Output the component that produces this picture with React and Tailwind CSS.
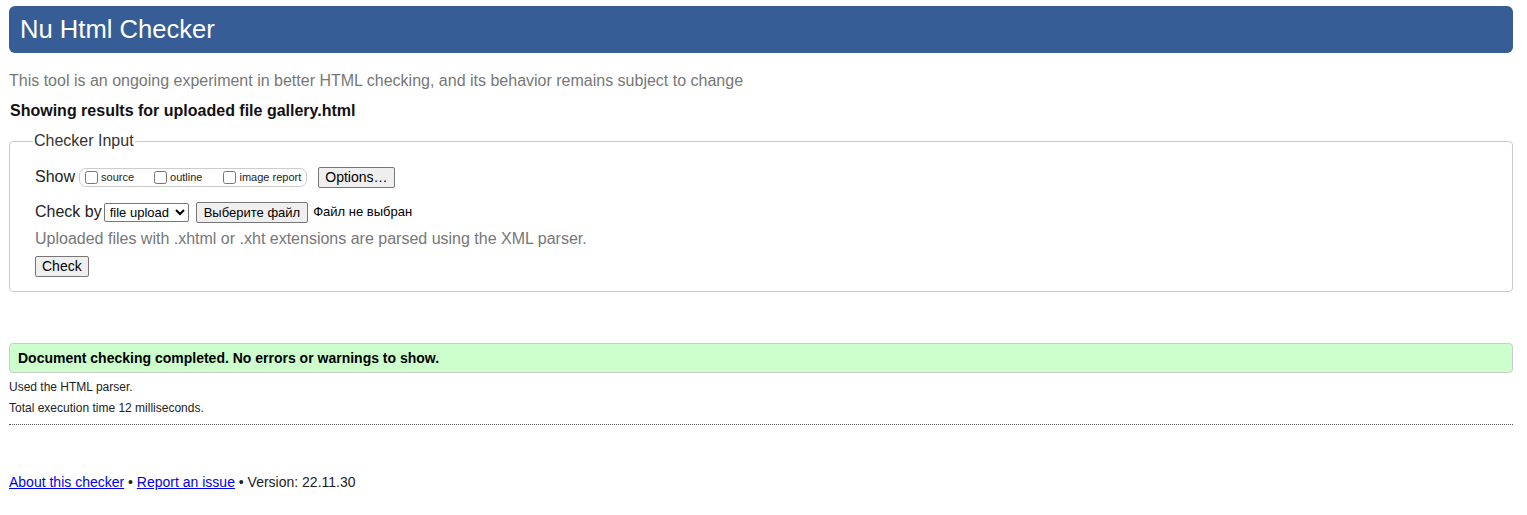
export default function App() {
  return (
    <div className="pl-[9px] pr-[14px] pt-[6px] pb-8 bg-white text-[#222] font-['Liberation_Sans',Arial,sans-serif]">
      <h1 className="bg-[#365d95] text-white text-[25.6px] leading-[47px] h-[47px] pl-[11px] rounded-[6px]">
        Nu Html Checker
      </h1>

      <p className="mt-[18px] text-[16px] leading-[20px] text-[#777]">
        This tool is an ongoing experiment in better HTML checking, and its behavior remains subject to change
      </p>
      <p className="mt-[10px] text-[16px] leading-[20px] font-bold text-[#111] pl-px">
        Showing results for uploaded file gallery.html
      </p>

      <fieldset className="mt-[11px] border border-[#ccc] rounded-[4px] pl-[25px] pr-4 pb-[13px] pt-[15px]">
        <legend className="text-[16px] leading-[18px] -ml-0.5 px-px text-[#333]">Checker Input</legend>

        <div className="flex items-center h-[24px]">
          <span className="text-[16px] text-[#222]">Show</span>
          <div className="ml-[4px] flex items-center h-[19px] border border-[#ccc] rounded-[7px] pl-[2px] pr-[5px]">
            <label className="flex items-center text-[11px] text-[#222]">
              <input type="checkbox" className="w-[13px] h-[13px] m-[3px] mr-[3px]" />
              source
            </label>
            <label className="flex items-center text-[11px] text-[#222] ml-[17px]">
              <input type="checkbox" className="w-[13px] h-[13px] m-[3px] mr-[3px]" />
              outline
            </label>
            <label className="flex items-center text-[11px] text-[#222] ml-[18px]">
              <input type="checkbox" className="w-[13px] h-[13px] m-[3px] mr-[3px]" />
              image report
            </label>
          </div>
          <button className="ml-[11px] h-[21px] px-[6px] text-[14px] leading-[19px] bg-[#efefef] border border-[#767676] rounded-[2px] text-black">
            Options…
          </button>
        </div>

        <div className="flex items-center h-[24px] mt-[11px]">
          <span className="text-[16px] text-[#222]">Check by</span>
          <select className="ml-[2px] h-[19px] w-[85px] text-[13px] leading-[17px] border border-[#767676] rounded-[2px] bg-white text-black pl-px">
            <option>file upload</option>
          </select>
          <button className="ml-[7px] h-[21px] px-[7px] text-[13px] leading-[19px] bg-[#efefef] border border-[#767676] rounded-[2px] text-black">
            Выберите файл
          </button>
          <span className="ml-[5px] text-[13px] text-black">Файл не выбран</span>
        </div>

        <p className="mt-[5px] text-[16px] leading-[20px] text-[#777]">
          Uploaded files with .xhtml or .xht extensions are parsed using the XML parser.
        </p>

        <button className="mt-[7px] h-[21px] px-[6px] text-[14px] leading-[19px] bg-[#efefef] border border-[#767676] rounded-[2px] text-black">
          Check
        </button>
      </fieldset>

      <div className="mt-[51px] h-[30px] flex items-center bg-[#ccffcc] border border-[#ccc] rounded-[4px] pl-[8px]">
        <p className="text-[14px] font-bold text-black">
          Document checking completed. No errors or warnings to show.
        </p>
      </div>

      <p className="mt-[7px] text-[12px] leading-[14px] text-[#222]">Used the HTML parser.</p>
      <p className="mt-[7px] text-[12px] leading-[14px] text-[#222]">Total execution time 12 milliseconds.</p>

      <div className="mt-[9px] border-t border-dotted border-[#555]"></div>

      <p className="mt-[49px] text-[14px] leading-[16px] text-[#222]">
        <a href="#" className="text-[#0000ee] underline">About this checker</a>
        {' • '}
        <a href="#" className="text-[#0000ee] underline">Report an issue</a>
        {' • Version: 22.11.30'}
      </p>
    </div>
  );
}
